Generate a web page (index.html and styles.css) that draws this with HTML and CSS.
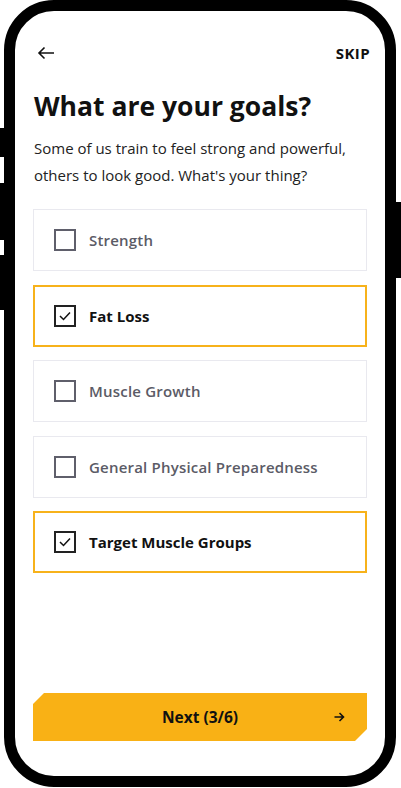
FILE: index.html
```html
<!DOCTYPE html>
<html lang="en">
<head>
    <meta charset="UTF-8">
    <meta name="viewport" content="width=device-width, initial-scale=1.0">
    <title>Goals</title>
    <link rel="stylesheet" href="styles.css">
</head>
<body>
    <div class="phone">
        <span class="side-btn left b1"></span>
        <span class="side-btn left b2"></span>
        <span class="side-btn left b3"></span>
        <span class="side-btn right b4"></span>

        <div class="screen">
            <div class="topbar">
                <svg class="back" width="18" height="14" viewBox="0 0 18 14">
                    <path d="M17 7H2M7.5 1.5L2 7l5.5 5.5" fill="none" stroke="#111" stroke-width="1.6"/>
                </svg>
                <span class="skip">SKIP</span>
            </div>

            <h1>What are your goals?</h1>
            <p class="intro">Some of us train to feel strong and powerful, others to look good. What's your thing?</p>

            <div class="options">
                <div class="option">
                    <span class="check"></span>
                    <span class="label">Strength</span>
                </div>
                <div class="option selected">
                    <span class="check">
                        <svg width="12" height="10" viewBox="0 0 12 10"><path d="M1 5l3.5 3.5L11 1.5" fill="none" stroke="#111" stroke-width="1.5"/></svg>
                    </span>
                    <span class="label">Fat Loss</span>
                </div>
                <div class="option">
                    <span class="check"></span>
                    <span class="label">Muscle Growth</span>
                </div>
                <div class="option">
                    <span class="check"></span>
                    <span class="label">General Physical Preparedness</span>
                </div>
                <div class="option selected">
                    <span class="check">
                        <svg width="12" height="10" viewBox="0 0 12 10"><path d="M1 5l3.5 3.5L11 1.5" fill="none" stroke="#111" stroke-width="1.5"/></svg>
                    </span>
                    <span class="label">Target Muscle Groups</span>
                </div>
            </div>

            <button class="next">
                <span>Next (3/6)</span>
                <svg class="next-arrow" width="11" height="10" viewBox="0 0 11 10">
                    <path d="M0.5 5H9.5M5.5 1L9.5 5L5.5 9" fill="none" stroke="#111" stroke-width="1.6"/>
                </svg>
            </button>
        </div>
    </div>
</body>
</html>
```

FILE: styles.css
```css
* {
    box-sizing: border-box;
}
body {
    margin: 0;
    background: #fff;
    font-family: "Open Sans", "Noto Sans", sans-serif;
    color: #111;
}
.phone {
    position: relative;
    width: 392px;
    height: 787px;
    margin-left: 4px;
    border: 11px solid #000;
    border-radius: 50px;
    background: #fff;
}
.side-btn {
    position: absolute;
    width: 5px;
    background: #000;
}
.side-btn.left {
    left: -15px;
}
.side-btn.right {
    right: -16px;
}
.b1 { top: 117px; height: 29px; }
.b2 { top: 172px; height: 57px; }
.b3 { top: 244px; height: 55px; }
.b4 { top: 191px; height: 76px; }

.screen {
    height: 100%;
    padding: 30px 18px 0 18px;
    display: flex;
    flex-direction: column;
}
.topbar {
    display: flex;
    justify-content: space-between;
    align-items: center;
    height: 24px;
    padding-left: 4px;
}
.skip {
    font-weight: 700;
    font-size: 15px;
    letter-spacing: 0.4px;
    margin-right: -3px;
}
h1 {
    margin: 24px 0 0 1px;
    font-size: 26.5px;
    font-weight: 700;
    line-height: 34px;
}
.intro {
    margin: 12px 0 0 1px;
    font-size: 15px;
    line-height: 27px;
    color: #222;
}
.options {
    margin-top: 20px;
    display: flex;
    flex-direction: column;
    gap: 13.5px;
}
.option {
    height: 62px;
    display: flex;
    align-items: center;
    gap: 13px;
    padding-left: 20px;
    border: 1px solid #e9e9ef;
}
.option.selected {
    border: 2px solid #f7b21b;
    padding-left: 19px;
}
.check {
    width: 22px;
    height: 22px;
    border: 2px solid #5f5f6b;
    display: flex;
    align-items: center;
    justify-content: center;
}
.selected .check {
    border-color: #222;
}
.label {
    font-size: 15px;
    font-weight: 600;
    letter-spacing: 0.2px;
    color: #5b5b66;
}
.selected .label {
    color: #111;
    font-weight: 700;
    letter-spacing: 0;
}
.next {
    margin-top: auto;
    margin-bottom: 35px;
    height: 48px;
    width: 100%;
    border: none;
    background: #f9b115;
    clip-path: polygon(11px 0, 100% 0, 100% calc(100% - 12px), calc(100% - 12px) 100%, 0 100%, 0 11px);
    font-family: inherit;
    font-size: 15.5px;
    font-weight: 700;
    color: #111;
    position: relative;
    display: flex;
    align-items: center;
    justify-content: center;
}
.next-arrow {
    position: absolute;
    right: 22px;
    top: 19px;
}
```
